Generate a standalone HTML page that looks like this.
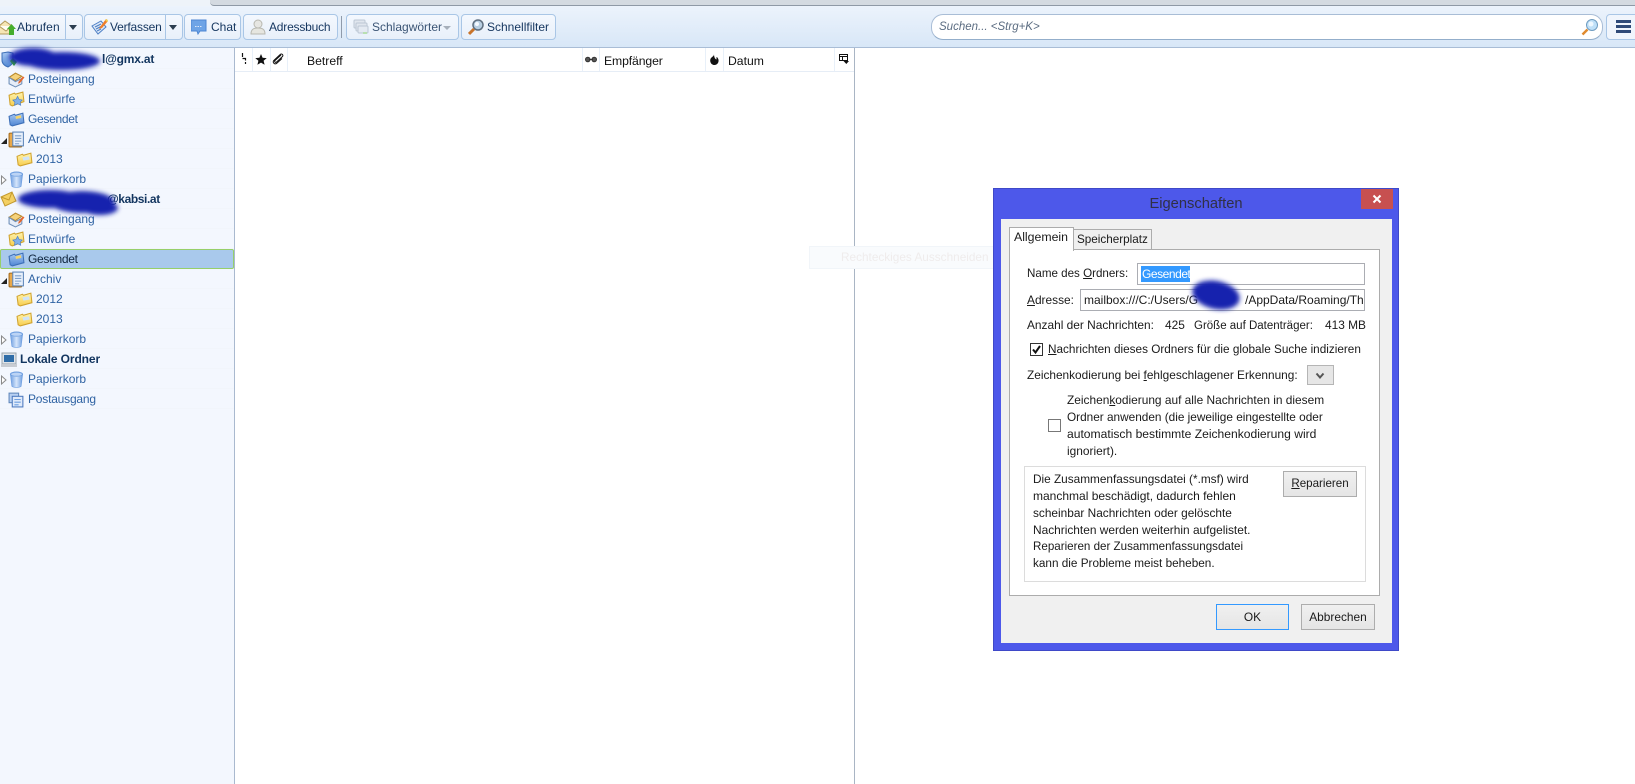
<!DOCTYPE html>
<html><head><meta charset="utf-8"><style>
html,body{margin:0;padding:0;width:1635px;height:784px;overflow:hidden;background:#fff;font-family:"Liberation Sans",sans-serif;font-size:12px;color:#111}
.a{position:absolute;white-space:nowrap}
.t{position:absolute;white-space:nowrap;line-height:16px;height:16px;transform:translateY(-8px)}
.btn{position:absolute;top:14px;height:24px;border:1px solid #a9c6e6;border-radius:4px;background:linear-gradient(#f4f8fe,#e8f0fa);box-sizing:content-box}
.tb{position:absolute;top:19px;font-size:12px;line-height:16px;color:#15365f;white-space:nowrap}
.f{position:absolute;left:0;width:234px;height:20px;line-height:20px;font-size:12px;color:#2f63a3;white-space:nowrap;border-bottom:1px solid #f1f5fb;box-sizing:border-box}
.f span{position:absolute;left:28px;top:0}
.f svg{position:absolute;left:8px;top:2px}
.dlg{font-size:11.9px;color:#1a1a1a}
.dbtn{position:absolute;border:1px solid #adadad;background:linear-gradient(#f0f0f0,#e5e5e5);text-align:center;font-size:11.9px;color:#1a1a1a;box-sizing:border-box}
u{text-decoration:underline}
</style></head><body>
<svg width="0" height="0" style="position:absolute"><defs>
<filter id="b" x="-20%" y="-50%" width="140%" height="200%"><feGaussianBlur stdDeviation="2.5"/></filter>
<linearGradient id="fy" x1="0" y1="0" x2="0" y2="1"><stop offset="0" stop-color="#fff4b0"/><stop offset="1" stop-color="#f7ce4e"/></linearGradient>
<linearGradient id="fb" x1="0" y1="0" x2="0" y2="1"><stop offset="0" stop-color="#a9caf3"/><stop offset="1" stop-color="#4f86d3"/></linearGradient>
<linearGradient id="tr" x1="0" y1="0" x2="1" y2="0"><stop offset="0" stop-color="#6f9fe0"/><stop offset=".5" stop-color="#d5e5fb"/><stop offset="1" stop-color="#6f9fe0"/></linearGradient>
<symbol id="folder" viewBox="0 0 16 16"><path d="M1 5l5-2 1 1 7-2 1 9-11 3-2-1z" fill="url(#fy)" stroke="#d0a32f"/><path d="M6 6l6-1 1 3-6 1z" fill="#cfe3f7"/></symbol>
<symbol id="sent" viewBox="0 0 16 16"><path d="M1 5l5-2 1 1 7-2 1 9-11 3-2-1z" fill="url(#fb)" stroke="#3d6fb8"/><path d="M7 5l5-1 .5 2.500-5 1z" fill="#f5d469"/></symbol>
<symbol id="draft" viewBox="0 0 16 16"><path d="M1 4l5-2 1 1 7-2 1 9-11 4-2-1z" fill="url(#fy)" stroke="#d0a32f"/><path d="M9 5l1.500 3 3 .5-2 2 .5 3-3-1.500-3 1.500 .5-3-2-2 3-.5z" fill="#7fb0ea" stroke="#4d7fc4" stroke-width=".6"/></symbol>
<symbol id="inbox" viewBox="0 0 16 16"><path d="M1 6l6-4 6 3-6 4z" fill="#f5d27a" stroke="#b98a2e"/><path d="M1 6v6l6 3 6-3V7l-6 3z" fill="#e6edf8" stroke="#6f8fb8"/><path d="M10 10l4-5 1.500 1-4 5-2 1z" fill="#e8662a"/></symbol>
<symbol id="arch" viewBox="0 0 16 16"><rect x="1" y="2" width="12" height="13" rx="1" fill="#e8a84a" stroke="#a46d1e"/><rect x="4.500" y="1" width="10" height="13" fill="#e8f0fb" stroke="#5f87bb"/><path d="M6.500 4.500h6M6.500 7h6M6.500 9.500h6M6.500 12h4" stroke="#7f9fc9"/></symbol>
<symbol id="trash" viewBox="1.500 0 13 15.500"><ellipse cx="8" cy="3" rx="5.500" ry="2" fill="#bcd4f5" stroke="#6f9fe0"/><path d="M2.500 3.500l1.300 10.500c1 1.300 7.400 1.300 8.400 0l1.300-10.500c-1.500 1.700-9.500 1.700-11 0z" fill="url(#tr)" stroke="#6f9fe0" stroke-width=".6"/></symbol>
<symbol id="out" viewBox="0 0 16 16"><rect x="1" y="2" width="9" height="9" fill="#b9d1f2" stroke="#5f87bb"/><rect x="4" y="5" width="10" height="10" fill="#dfeafa" stroke="#4d7ac0"/><path d="M6 8h6M6 10.500h6M6 13h4" stroke="#6f9fe0"/></symbol>
</defs></svg>

<!-- top strip -->
<div class="a" style="left:0;top:0;width:1635px;height:7px;background:#eef3f9"></div>
<div class="a" style="left:210px;top:0;width:1425px;height:5px;background:#d4dae1;border-bottom:1px solid #8f99a6;border-bottom-left-radius:4px"></div>
<!-- toolbar -->
<div class="a" style="left:0;top:6px;width:1635px;height:41px;background:linear-gradient(#ecf3fc,#d8e7f7);border-bottom:1px solid #a9bdd6"></div>

<div class="btn" style="left:-3px;width:84px"></div><div class="a" style="left:65px;top:15px;width:1px;height:24px;background:#a9c6e6"></div>
<svg class="a" style="left:0;top:19px" width="16" height="17" viewBox="0 0 16 17"><path d="M-1 7l6-5 7 5v8H-1z" fill="#f6e6b4" stroke="#b29a5c"/><path d="M-1 7l7 5 6-5" fill="#fffdf2" stroke="#b29a5c"/><path d="M9 16V10H7l4.500-5 4.500 5h-2v6z" fill="#45ad2c"/></svg>
<div class="tb" style="left:17px;letter-spacing:.1px">Abrufen</div>
<div class="a" style="left:69px;top:25px;width:0;height:0;border:4px solid transparent;border-top:5px solid #2c3e50;border-bottom:0"></div>

<div class="btn" style="left:84px;width:97px"></div><div class="a" style="left:165px;top:15px;width:1px;height:24px;background:#a9c6e6"></div>
<svg class="a" style="left:91px;top:18px" width="18" height="18" viewBox="0 0 18 18"><path d="M1 8l9-5 5 6-8 7z" fill="#dce8f8" stroke="#4d7fc4"/><path d="M4 9l6-3M5 11l6-3M6 13l4-2" stroke="#4d7fc4"/><path d="M9 9l6-8 2 2-6 7-3 1z" fill="#ef7f2a"/><path d="M14 2l2-1 1 2-1 1z" fill="#f0d050"/></svg>
<div class="tb" style="left:110px;letter-spacing:-.2px">Verfassen</div>
<div class="a" style="left:169px;top:25px;width:0;height:0;border:4px solid transparent;border-top:5px solid #2c3e50;border-bottom:0"></div>

<div class="btn" style="left:184px;width:55px"></div>
<svg class="a" style="left:191px;top:19px" width="16" height="17" viewBox="0 0 16 17"><path d="M0 1h15v11H9l-2 3-1-3H0z" fill="#6ea4e6" stroke="#4d86d3"/><path d="M4 7.500h7" stroke="#dce9fa" stroke-dasharray="1.500 1"/></svg>
<div class="tb" style="left:211px">Chat</div>

<div class="btn" style="left:243px;width:93px"></div>
<svg class="a" style="left:250px;top:18px" width="16" height="18" viewBox="0 0 16 18"><circle cx="8" cy="6" r="4" fill="#e6e6e2" stroke="#b8b8b0"/><path d="M1 16c0-5 3-6 7-6s7 1 7 6z" fill="#e6e6e0" stroke="#b8b8b0"/></svg>
<div class="tb" style="left:269px;letter-spacing:-.2px">Adressbuch</div>

<div class="a" style="left:341px;top:16px;width:1px;height:22px;background:#8f9bab"></div>

<div class="btn" style="left:346px;width:111px"></div>
<svg class="a" style="left:353px;top:19px" width="16" height="16" viewBox="0 0 16 16"><rect x="1" y="1" width="11" height="8" rx="1" fill="#e0e6ee" stroke="#bcc7d4"/><rect x="3" y="4" width="11" height="8" rx="1" fill="#e0e6ee" stroke="#bcc7d4"/><rect x="5" y="7" width="10" height="7" rx="1" fill="#e4eaf2" stroke="#bcc7d4"/><rect x="10" y="13" width="4" height="2" fill="#b8e0b0"/></svg>
<div class="tb" style="left:372px;color:#3b5575">Schlagwörter</div>
<div class="a" style="left:443px;top:26px;width:0;height:0;border:4px solid transparent;border-top:4px solid #a7b0bb;border-bottom:0"></div>

<div class="btn" style="left:461px;width:93px"></div>
<svg class="a" style="left:468px;top:19px" width="16" height="17" viewBox="0 0 16 17"><circle cx="10" cy="6" r="5" fill="#b9cfe2" stroke="#5f6f80" stroke-width="1.500"/><path d="M6 10l-5 5" stroke="#c9742a" stroke-width="3"/><circle cx="9" cy="5" r="2" fill="#f4f9ff"/></svg>
<div class="tb" style="left:487px">Schnellfilter</div>

<!-- search -->
<div class="a" style="left:931px;top:14px;width:670px;height:24px;background:#fff;border:1px solid #a9bdd6;border-radius:12px;border-bottom-color:#93aecb"></div>
<div class="a" style="left:939px;top:19px;font-size:11.5px;font-style:italic;line-height:16px;color:#5c6d82">Suchen... &lt;Strg+K&gt;</div>
<svg class="a" style="left:1581px;top:18px" width="18" height="18" viewBox="0 0 18 18"><circle cx="11" cy="7" r="5.500" fill="#bfe0f8" stroke="#6f9cc0"/><circle cx="10" cy="6" r="2.500" fill="#eef8ff"/><path d="M6.500 11.500L1.500 16.500" stroke="#e08a2e" stroke-width="2.500"/></svg>
<div class="btn" style="left:1606px;width:40px;background:#f0f5fc"></div>
<div class="a" style="left:1616px;top:20px;width:15px;height:3px;background:#2f4a78"></div>
<div class="a" style="left:1616px;top:25px;width:15px;height:3px;background:#2f4a78"></div>
<div class="a" style="left:1616px;top:30px;width:15px;height:3px;background:#2f4a78"></div>

<!-- sidebar -->
<div class="a" style="left:0;top:48px;width:234px;height:736px;background:#f3f7fe;border-right:1px solid #a9b9cf"></div>

<div class="f" style="top:49px;font-weight:bold;color:#12355f"><span style="left:102px;letter-spacing:-.2px">l@gmx.at</span><svg style="left:1px" width="17" height="17" viewBox="0 0 17 17"><path d="M1 2l6-1 5 1v7c0 4-3 6-5 7-3-1-6-3-6-7z" fill="url(#fb)" stroke="#3d6fb8"/><path d="M9 10l3-3 4 4-3 4z" fill="#39a82e"/></svg></div>
<div class="f" style="top:69px"><svg width="17" height="17"><use href="#inbox"/></svg><span>Posteingang</span></div>
<div class="f" style="top:89px"><svg width="17" height="17"><use href="#draft"/></svg><span>Entwürfe</span></div>
<div class="f" style="top:109px"><svg width="17" height="17"><use href="#sent"/></svg><span style="letter-spacing:-.3px">Gesendet</span></div>
<div class="f" style="top:129px"><svg width="17" height="17"><use href="#arch"/></svg><span>Archiv</span></div>
<div class="f" style="top:149px"><svg style="left:16px" width="17" height="17"><use href="#folder"/></svg><span style="left:36px">2013</span></div>
<div class="f" style="top:169px"><svg width="17" height="17"><use href="#trash"/></svg><span>Papierkorb</span></div>
<div class="f" style="top:189px;font-weight:bold;color:#12355f"><span style="left:107px;letter-spacing:-.4px">@kabsi.at</span><svg style="left:0" width="17" height="17" viewBox="0 0 17 17"><path d="M1 6l11-5 4 9-11 5z" fill="#f4d063" stroke="#c49a2e"/><path d="M1 6l8 3 3-8" fill="none" stroke="#c49a2e"/></svg></div>
<div class="f" style="top:209px"><svg width="17" height="17"><use href="#inbox"/></svg><span>Posteingang</span></div>
<div class="f" style="top:229px"><svg width="17" height="17"><use href="#draft"/></svg><span>Entwürfe</span></div>
<div class="f" style="top:249px;background:#a9c9ec;border:1px solid #96cf6a;border-radius:2px;color:#10263f;height:20px;line-height:18px"><svg style="left:7px;top:1px" width="17" height="17"><use href="#sent"/></svg><span style="left:27px;letter-spacing:-.3px">Gesendet</span></div>
<div class="f" style="top:269px"><svg width="17" height="17"><use href="#arch"/></svg><span>Archiv</span></div>
<div class="f" style="top:289px"><svg style="left:16px" width="17" height="17"><use href="#folder"/></svg><span style="left:36px">2012</span></div>
<div class="f" style="top:309px"><svg style="left:16px" width="17" height="17"><use href="#folder"/></svg><span style="left:36px">2013</span></div>
<div class="f" style="top:329px"><svg width="17" height="17"><use href="#trash"/></svg><span>Papierkorb</span></div>
<div class="f" style="top:349px;font-weight:bold;color:#12355f"><span style="left:20px;letter-spacing:-.1px">Lokale Ordner</span><svg style="left:1px" width="16" height="17" viewBox="0 0 16 17"><rect x="1" y="2" width="14" height="11" fill="#dfe3e8" stroke="#9aa4ae"/><rect x="3" y="4" width="10" height="7" fill="#2f6da8"/><rect x="0" y="13" width="16" height="3" fill="#c8ccd2"/></svg></div>
<div class="f" style="top:369px"><svg width="17" height="17"><use href="#trash"/></svg><span>Papierkorb</span></div>
<div class="f" style="top:389px"><svg width="17" height="17"><use href="#out"/></svg><span style="letter-spacing:-.2px">Postausgang</span></div>

<!-- twisties -->
<svg class="a" style="left:0;top:130px" width="8" height="20"><path d="M1 14L7 8v6z" fill="#222"/></svg>
<svg class="a" style="left:0;top:170px" width="8" height="20"><path d="M1.500 6l4.500 4-4.500 4z" fill="#fff" stroke="#8a8a8a"/></svg>
<svg class="a" style="left:0;top:270px" width="8" height="20"><path d="M1 14L7 8v6z" fill="#222"/></svg>
<svg class="a" style="left:0;top:330px" width="8" height="20"><path d="M1.500 6l4.500 4-4.500 4z" fill="#fff" stroke="#8a8a8a"/></svg>
<svg class="a" style="left:0;top:370px" width="8" height="20"><path d="M1.500 6l4.500 4-4.500 4z" fill="#fff" stroke="#8a8a8a"/></svg>

<!-- scribbles -->
<svg class="a" style="left:0;top:40px" width="140" height="200"><g filter="url(#b)" fill="#1320ae"><ellipse cx="33" cy="17" rx="24" ry="9"/><ellipse cx="62" cy="21" rx="38" ry="9"/><ellipse cx="50" cy="159" rx="32" ry="9"/><ellipse cx="82" cy="162" rx="32" ry="11"/><ellipse cx="100" cy="168" rx="18" ry="7"/></g></svg>

<!-- thread pane -->
<div class="a" style="left:235px;top:48px;width:619px;height:23px;background:#fff;border-bottom:1px solid #e6edf6"></div>
<div class="a" style="left:252px;top:48px;width:1px;height:23px;background:#e8f0f9"></div>
<div class="a" style="left:270px;top:48px;width:1px;height:23px;background:#e8f0f9"></div>
<div class="a" style="left:287px;top:48px;width:1px;height:23px;background:#e8f0f9"></div>
<div class="a" style="left:582px;top:48px;width:1px;height:23px;background:#e8f0f9"></div>
<div class="a" style="left:599px;top:48px;width:1px;height:23px;background:#e8f0f9"></div>
<div class="a" style="left:705px;top:48px;width:1px;height:23px;background:#e8f0f9"></div>
<div class="a" style="left:723px;top:48px;width:1px;height:23px;background:#e8f0f9"></div>
<div class="a" style="left:834px;top:48px;width:1px;height:23px;background:#e8f0f9"></div>
<svg class="a" style="left:241px;top:53px" width="6" height="11"><path d="M1.500 0v4M1.500 5.500h3v2M4.500 9v2" fill="none" stroke="#111" stroke-width="1.200"/></svg>
<svg class="a" style="left:255px;top:54px" width="12" height="11" viewBox="0 0 12 11"><path d="M6 0l1.600 3.800 4.100.3-3.100 2.700 1 4L6 8.600 2.400 10.800l1-4L.3 4.100l4.100-.3z" fill="#111"/></svg>
<svg class="a" style="left:272px;top:53px" width="12" height="12" viewBox="0 0 12 12"><path d="M9 2L3 7.500c-1 1.200 .5 2.500 1.600 1.500L10.500 3.500c1.300-1.500-.8-3.300-2.300-2L1.800 7.500c-1.800 2 1 4.500 3 2.700L10 5.500" fill="none" stroke="#111"/></svg>
<div class="t" style="left:307px;top:61px;font-size:12.2px">Betreff</div>
<svg class="a" style="left:585px;top:56px" width="12" height="7"><circle cx="2.800" cy="3.500" r="2.300" fill="#555" stroke="#333"/><circle cx="9.200" cy="3.500" r="2.300" fill="#555" stroke="#333"/><path d="M4 3.500h4" stroke="#333"/></svg>
<div class="t" style="left:604px;top:61px;font-size:12.2px;letter-spacing:-.1px">Empfänger</div>
<svg class="a" style="left:710px;top:54px" width="9" height="11" viewBox="0 0 9 11"><path d="M4 0c0 2-1 2-3 4-2 3 0 7 3.500 7S9.500 7 8 4.500C7.500 3.500 7 3 6.500 3v2.500C5 5 4 3 4 0z" fill="#111"/></svg>
<div class="t" style="left:728px;top:61px;font-size:12.2px">Datum</div>
<svg class="a" style="left:839px;top:54px" width="10" height="10" viewBox="0 0 10 10"><path d="M.5 .5h8v6h-8zM.5 2.500h8M3.500 2.500v4" fill="none" stroke="#111"/><path d="M4.500 7h5.500l-2.700 3z" fill="#111"/></svg>

<!-- pane divider -->
<div class="a" style="left:854px;top:48px;width:1px;height:736px;background:#a9b5c4"></div>

<!-- ghost -->
<div class="a" style="left:809px;top:246px;width:229px;height:21px;background:#f9fbfd;border:1px solid #f1f5f9"></div>
<div class="t" style="left:841px;top:257px;font-size:11.8px;color:#efecec">Rechteckiges Ausschneiden</div>

<!-- dialog -->
<div class="a dlg" style="left:993px;top:188px;width:406px;height:463px;background:#4d58ea;box-shadow:0 0 0 1px #3f49c8 inset"></div>
<div class="t" style="left:993px;width:406px;text-align:center;top:204px;font-size:14.7px;color:#303045">Eigenschaften</div>
<div class="a" style="left:1361px;top:189px;width:32px;height:20px;background:#c75050"></div>
<svg class="a" style="left:1372px;top:194px" width="10" height="10"><path d="M1.500 1.500l7 7M8.500 1.500l-7 7" stroke="#fff" stroke-width="2"/></svg>
<div class="a" style="left:1001px;top:219px;width:391px;height:424px;background:#f0f0f0"></div>

<div class="a" style="left:1073px;top:229px;width:77px;height:20px;background:#f0f0f0;border:1px solid #acacac"></div>
<div class="a" style="left:1009px;top:249px;width:369px;height:345px;background:#fff;border:1px solid #acacac;box-sizing:content-box"></div>
<div class="a" style="left:1009px;top:227px;width:63px;height:23px;background:#fff;border:1px solid #acacac;border-bottom:0"></div>
<div class="t dlg" style="left:1014px;top:237px;font-size:12.3px">Allgemein</div>
<div class="t dlg" style="left:1077px;top:240px;font-size:11.7px">Speicherplatz</div>

<div class="t dlg" style="left:1027px;top:274px;font-size:11.6px">Name des <u>O</u>rdners:</div>
<div class="a" style="left:1137px;top:263px;width:226px;height:20px;background:#fff;border:1px solid #abadb3"></div>
<div class="a" style="left:1141px;top:266px;width:49px;height:16px;background:#3399ff"></div>
<div class="t dlg" style="left:1142px;top:274px;color:#fff;font-size:12px;letter-spacing:-.45px">Gesendet</div>

<div class="t dlg" style="left:1027px;top:300px"><u>A</u>dresse:</div>
<div class="a" style="left:1080px;top:289px;width:283px;height:20px;background:#fff;border:1px solid #abadb3"></div>
<div class="t dlg" style="left:1084px;top:300px;font-size:12px">mailbox:///C:/Users/G</div>
<div class="t dlg" style="left:1245px;top:300px;width:118px;overflow:hidden;font-size:12px">/AppData/Roaming/Th</div>
<svg class="a" style="left:1170px;top:265px" width="90" height="60"><g filter="url(#b)" fill="#1320ae"><ellipse cx="46" cy="30" rx="24" ry="14" transform="rotate(12 46 30)"/></g></svg>

<div class="t dlg" style="left:1027px;top:325px">Anzahl der Nachrichten:</div>
<div class="t dlg" style="left:1165px;top:325px">425</div>
<div class="t dlg" style="left:1194px;top:326px;font-size:11.5px">Größe auf Datenträger:</div>
<div class="t dlg" style="left:1325px;top:325px">413 MB</div>

<div class="a" style="left:1030px;top:343px;width:11px;height:11px;background:#fff;border:1px solid #333"></div>
<svg class="a" style="left:1031px;top:344px" width="11" height="11"><path d="M2 5.500l2.500 3L9 2" fill="none" stroke="#111" stroke-width="2"/></svg>
<div class="t dlg" style="left:1048px;top:350px;font-size:11.75px"><u>N</u>achrichten dieses Ordners für die globale Suche indizieren</div>

<div class="t dlg" style="left:1027px;top:375px;font-size:11.85px">Zeichenkodierung bei <u>f</u>ehlgeschlagener Erkennung:</div>
<div class="a" style="left:1307px;top:365px;width:25px;height:18px;background:#e6e6e6;border:1px solid #b5b5b5"></div>
<svg class="a" style="left:1315px;top:372px" width="10" height="8"><path d="M1.500 1.500L5 5.500l3.500-4" fill="none" stroke="#555" stroke-width="2"/></svg>

<div class="a" style="left:1048px;top:419px;width:11px;height:11px;background:#fff;border:1px solid #777"></div>
<div class="t dlg" style="left:1067px;top:400px;font-size:11.9px">Zeichen<u>k</u>odierung auf alle Nachrichten in diesem</div>
<div class="t dlg" style="left:1067px;top:417px;font-size:11.8px">Ordner anwenden (die jeweilige eingestellte oder</div>
<div class="t dlg" style="left:1067px;top:434px;font-size:12.1px">automatisch bestimmte Zeichenkodierung wird</div>
<div class="t dlg" style="left:1067px;top:451px">ignoriert).</div>

<div class="a" style="left:1024px;top:466px;width:340px;height:114px;background:#fff;border:1px solid #dcdcdc"></div>
<div class="t dlg" style="left:1033px;top:479px;font-size:11.8px">Die Zusammenfassungsdatei (*.msf) wird</div>
<div class="t dlg" style="left:1033px;top:496px;font-size:12px">manchmal beschädigt, dadurch fehlen</div>
<div class="t dlg" style="left:1033px;top:513px;font-size:11.85px">scheinbar Nachrichten oder gelöschte</div>
<div class="t dlg" style="left:1033px;top:530px;font-size:11.9px">Nachrichten werden weiterhin aufgelistet.</div>
<div class="t dlg" style="left:1033px;top:547px;font-size:11.6px">Reparieren der Zusammenfassungsdatei</div>
<div class="t dlg" style="left:1033px;top:564px;font-size:11.75px">kann die Probleme meist beheben.</div>
<div class="dbtn" style="left:1283px;top:471px;width:74px;height:26px;line-height:24px;font-size:11.6px"><u>R</u>eparieren</div>

<div class="dbtn" style="left:1216px;top:604px;width:73px;height:26px;line-height:24px;border-color:#3399ff">OK</div>
<div class="dbtn" style="left:1301px;top:604px;width:74px;height:26px;line-height:24px">Abbrechen</div>
</body></html>
